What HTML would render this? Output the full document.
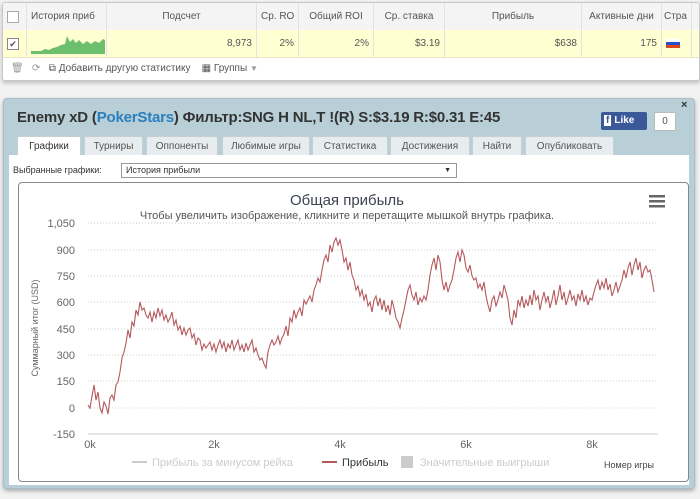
<!DOCTYPE html>
<html><head><meta charset="utf-8"><style>
body{margin:0;width:700px;height:499px;background:#f2f2f2;font-family:"Liberation Sans","DejaVu Sans",sans-serif;position:relative;overflow:hidden}
.top{position:absolute;left:2px;top:2px;width:696px;height:77px;background:#fff;border:1px solid #c8c8c8;border-radius:3px;box-shadow:0 2px 4px #bbb;overflow:hidden}
.hr,.dr{position:absolute;left:0;height:27px;width:700px;font-size:10px;color:#555}
.hr{top:0;background:#f4f4f4;border-bottom:1px solid #ddd}
.dr{top:27px;background:#ffffd2;border-bottom:1px solid #e6e6c0}
.c{position:absolute;top:0;height:100%;line-height:27px;border-right:1px solid #e2e2e2;box-sizing:border-box;padding:0 4px;white-space:nowrap;overflow:hidden}
.tb{position:absolute;top:60px;left:8px;font-size:10px;color:#555}
.main{position:absolute;left:3px;top:98px;width:690px;height:389px;background:#b8cfd8;border:1px solid #a9bec7;border-radius:4px;box-shadow:0 2px 4px #aaa}
.title{position:absolute;left:13px;top:10px;font-size:15px;font-weight:bold;color:#333;letter-spacing:-0.2px}
.tabs{position:absolute;top:37px;left:0;font-size:10px}
.tab{position:absolute;top:0;height:19px;line-height:19px;background:#e7ecee;border:1px solid #c5d0d4;border-bottom:none;color:#555;text-align:center;border-radius:2px 2px 0 0}
.content{position:absolute;left:5px;top:56px;width:680px;height:330px;background:#fff}
.chart{position:absolute;left:9px;top:27px;width:669px;height:298px;border:1px solid #888;border-radius:4px;background:#fff}
</style></head><body>
<div class="top">
<div class="hr">
<div class="c" style="left:0;width:24px"><span style="display:inline-block;width:10px;height:10px;border:1px solid #aaa;margin-top:8px;background:#fff"></span></div>
<div class="c" style="left:24px;width:80px">История приб</div>
<div class="c" style="left:104px;width:150px;text-align:center">Подсчет</div>
<div class="c" style="left:254px;width:42px;text-align:center">Ср. RO</div>
<div class="c" style="left:296px;width:75px;text-align:center">Общий ROI</div>
<div class="c" style="left:371px;width:71px;text-align:center">Ср. ставка</div>
<div class="c" style="left:442px;width:137px;text-align:center">Прибыль</div>
<div class="c" style="left:579px;width:80px;text-align:center">Активные дни</div>
<div class="c" style="left:659px;width:30px;padding:0 2px">Стра</div>
</div>
<div class="dr">
<div class="c" style="left:0;width:24px"><span style="display:inline-block;width:10px;height:10px;border:1px solid #888;margin-top:8px;background:#fff;font-size:9px;line-height:10px;text-align:center">✔</span></div>
<div class="c" style="left:24px;width:80px"><svg width="74" height="24" style="position:absolute;left:4px;top:2px"><path d="M0,22 L0,19 L10,19 L14,17 L18,18 L22,16 L26,15 L30,13 L34,12 L36,4 L39,10 L42,7 L45,11 L48,8 L52,12 L56,9 L60,12 L64,9 L68,11 L72,7 L74,8 L74,22Z" fill="#6cbf6c"/></svg></div>
<div class="c" style="left:104px;width:150px;text-align:right">8,973</div>
<div class="c" style="left:254px;width:42px;text-align:right">2%</div>
<div class="c" style="left:296px;width:75px;text-align:right">2%</div>
<div class="c" style="left:371px;width:71px;text-align:right">$3.19</div>
<div class="c" style="left:442px;width:137px;text-align:right">$638</div>
<div class="c" style="left:579px;width:80px;text-align:right">175</div>
<div class="c" style="left:659px;width:30px"><span style="display:inline-block;width:14px;height:9px;margin-top:9px;background:linear-gradient(#fff 33%,#2a4fc9 33%,#2a4fc9 66%,#d42 66%)"></span></div>
</div>
<div class="tb"><span style="color:#999">🗑</span> &nbsp; <span style="color:#999">⟳</span> &nbsp; ⧉ Добавить другую статистику &nbsp;&nbsp; ▦ Группы <span style="color:#999;font-size:8px">▼</span></div>
</div>

<div class="main">
<div class="title">Enemy xD (<span style="color:#2a7fbf">PokerStars</span>) Фильтр:SNG H NL,T !(R) S:$3.19 R:$0.31 E:45</div>
<div style="position:absolute;left:597px;top:13px;width:46px;height:18px;background:#3b5998;color:#fff;font-size:10px;font-weight:bold;line-height:18px;border-radius:2px"><span style="background:#fff;color:#3b5998;padding:0 2px;margin:0 3px">f</span>Like</div>
<div style="position:absolute;left:650px;top:13px;width:20px;height:17px;background:#fff;border:1px solid #bbb;font-size:10px;line-height:17px;text-align:center;color:#555">0</div>
<div style="position:absolute;left:677px;top:0;font-size:11px;font-weight:bold;color:#333">×</div>
<div class="tabs">
<div class="tab" style="left:13px;width:62px;background:#fff;height:20px;color:#333">Графики</div>
<div class="tab" style="left:80px;width:57px">Турниры</div>
<div class="tab" style="left:142px;width:70px">Оппоненты</div>
<div class="tab" style="left:218px;width:86px">Любимые игры</div>
<div class="tab" style="left:308px;width:74px">Статистика</div>
<div class="tab" style="left:386px;width:78px">Достижения</div>
<div class="tab" style="left:468px;width:48px">Найти</div>
<div class="tab" style="left:521px;width:87px">Опубликовать</div>
</div>
<div class="content">
<div style="position:absolute;left:4px;top:10px;font-size:9px;color:#333">Выбранные графики:</div>
<div style="position:absolute;left:112px;top:8px;width:330px;height:13px;border:1px solid #999;font-size:9px;line-height:13px;padding-left:4px;color:#333">История прибыли<span style="position:absolute;right:5px;font-size:7px">▼</span></div>
<div class="chart"></div>
</div>
</div>

<svg width="700" height="499" style="position:absolute;left:0;top:0" font-family="Liberation Sans, DejaVu Sans, sans-serif">
<text x="347" y="205" font-size="15" fill="#3c4450" text-anchor="middle">Общая прибыль</text>
<text x="347" y="219" font-size="11" fill="#555" text-anchor="middle">Чтобы увеличить изображение, кликните и перетащите мышкой внутрь графика.</text>
<g fill="#666"><rect x="649" y="195" width="16" height="2.5"/><rect x="649" y="200" width="16" height="2.5"/><rect x="649" y="205" width="16" height="2.5"/></g>
<g stroke="#ccc" stroke-dasharray="1,2">
<line x1="88" x2="658" y1="223" y2="223"/><line x1="88" x2="658" y1="250" y2="250"/><line x1="88" x2="658" y1="276" y2="276"/><line x1="88" x2="658" y1="302" y2="302"/><line x1="88" x2="658" y1="329" y2="329"/><line x1="88" x2="658" y1="355" y2="355"/><line x1="88" x2="658" y1="381" y2="381"/><line x1="88" x2="658" y1="408" y2="408"/>
</g>
<line x1="88" x2="658" y1="434" y2="434" stroke="#ccc"/>
<g font-size="11" fill="#666" text-anchor="end">
<text x="75" y="227">1,050</text><text x="75" y="254">900</text><text x="75" y="280">750</text><text x="75" y="306">600</text><text x="75" y="333">450</text><text x="75" y="359">300</text><text x="75" y="385">150</text><text x="75" y="412">0</text><text x="75" y="438">-150</text>
</g>
<g font-size="11" fill="#666" text-anchor="middle">
<text x="90" y="448">0k</text><text x="214" y="448">2k</text><text x="340" y="448">4k</text><text x="466" y="448">6k</text><text x="592" y="448">8k</text>
</g>
<text transform="translate(38,328) rotate(-90)" font-size="9" fill="#666" text-anchor="middle">Суммарный итог (USD)</text>
<polyline fill="none" stroke="#b5595c" stroke-width="1.1" points="88,405 90,408 92,396 94,385 96,400 98,392 100,408 102,413 104,402 106,406 108,414 110,398 112,395 114,400 116,385 118,382 120,372 122,358 124,352 126,343 128,330 130,338 132,322 134,326 136,310 138,315 140,302 142,310 144,308 146,315 148,318 150,312 152,322 154,312 156,318 158,308 160,316 162,310 164,320 166,315 168,322 170,318 172,312 174,325 176,320 178,330 180,326 182,335 184,328 186,335 188,330 190,328 192,338 194,334 196,345 198,338 200,340 202,350 204,344 206,348 208,345 210,342 212,350 214,344 216,352 218,345 220,340 222,348 224,342 226,352 228,344 230,348 232,340 234,350 236,345 238,340 240,350 242,345 244,352 246,343 248,350 250,345 252,340 254,352 256,348 258,355 260,360 262,358 264,364 266,368 268,352 270,345 272,340 274,345 276,342 278,336 280,344 282,338 284,334 286,326 288,336 290,318 292,322 294,310 296,318 298,312 300,308 302,316 304,300 306,304 308,300 310,296 312,302 314,290 316,285 318,278 320,282 322,270 324,260 326,255 328,262 330,245 332,252 334,242 336,238 338,245 340,240 342,250 344,262 346,258 348,270 350,262 352,275 354,280 356,290 358,286 360,296 362,290 364,300 366,294 368,306 370,302 372,312 374,300 376,296 378,306 380,298 382,310 384,300 386,312 388,305 390,315 392,300 394,308 396,318 398,322 400,328 402,318 404,310 406,300 408,290 410,285 412,295 414,300 416,292 418,305 420,298 422,302 424,296 426,300 428,290 430,275 432,265 434,258 436,270 438,255 440,262 442,280 444,290 446,282 448,292 450,285 452,280 454,270 456,258 458,252 460,262 462,250 464,255 466,268 468,272 470,265 472,276 474,280 476,278 478,288 480,284 482,290 484,282 486,296 488,305 490,312 492,300 494,296 496,306 498,300 500,292 502,298 504,285 506,292 508,300 510,318 512,325 514,310 516,318 518,300 520,306 522,296 524,308 526,300 528,306 530,295 532,305 534,290 536,300 538,296 540,310 542,300 544,292 546,302 548,296 550,308 552,300 554,290 556,305 558,296 560,285 562,300 564,292 566,305 568,298 570,290 572,300 574,296 576,306 578,294 580,300 582,290 584,302 586,296 588,305 590,298 592,300 594,292 596,285 598,280 600,290 602,282 604,288 606,278 608,290 610,284 612,296 614,290 616,282 618,292 620,286 622,280 624,270 626,278 628,268 630,262 632,275 634,265 636,258 638,270 640,262 642,278 644,270 646,266 648,272 650,270 652,280 654,292"/>
<g font-size="11" text-anchor="start">
<line x1="132" x2="147" y1="462" y2="462" stroke="#ccc" stroke-width="2"/><text x="152" y="466" fill="#ccc">Прибыль за минусом рейка</text>
<line x1="322" x2="337" y1="462" y2="462" stroke="#b5595c" stroke-width="2"/><text x="342" y="466" fill="#333">Прибыль</text>
<rect x="401" y="456" width="12" height="12" fill="#ccc"/><text x="420" y="466" fill="#ccc">Значительные выигрыши</text>
</g>
<text x="604" y="468" font-size="9" fill="#444">Номер игры</text>
</svg>
</body></html>
